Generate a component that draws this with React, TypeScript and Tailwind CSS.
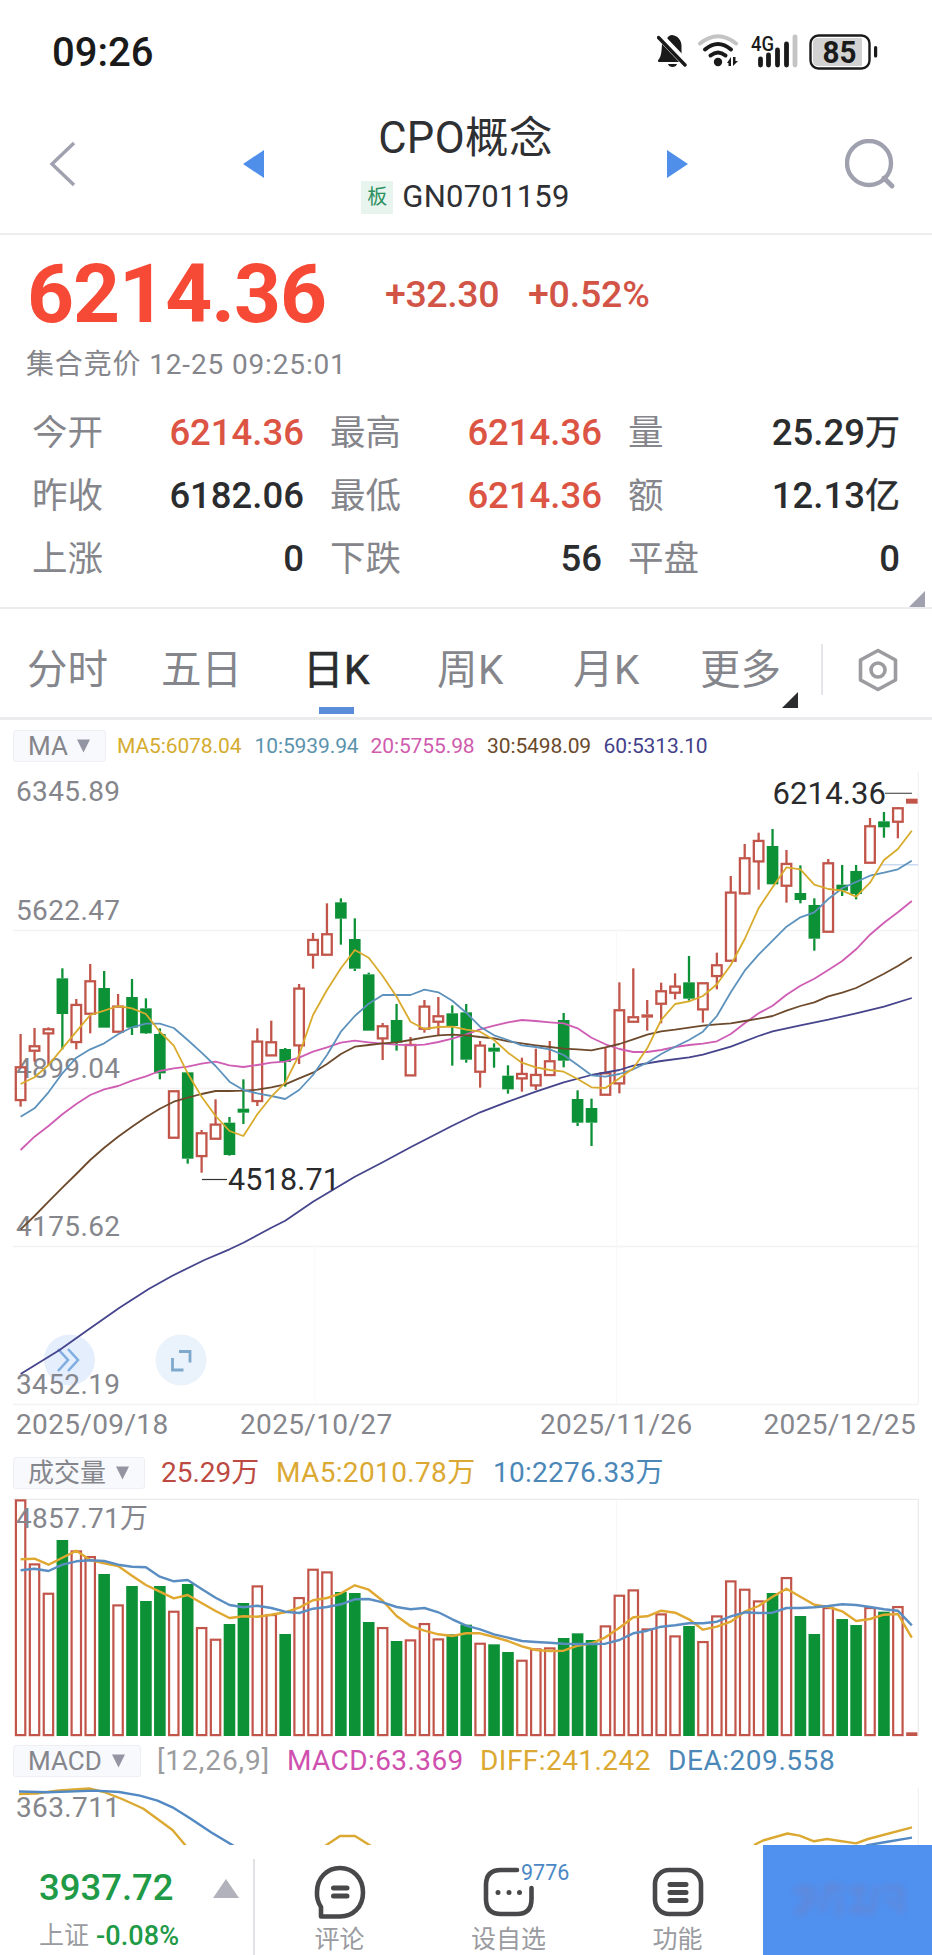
import React from "react";

type Candle = [up: 0 | 1, top: number, bottom: number, high: number, low: number];

// Each value below is in thirds of a pixel, measured from the top of its own panel.
const CANDLES: Candle[] = [
  [1, 920, 1022, 822, 1040], [1, 857, 874, 804, 905], [1, 806, 822, 802, 915], [0, 655, 762, 625, 868],
  [1, 733, 848, 717, 868], [1, 662, 763, 612, 820], [0, 684, 803, 633, 803], [1, 738, 817, 702, 817],
  [0, 711, 803, 657, 825], [0, 745, 820, 715, 822], [0, 822, 940, 805, 958], [1, 992, 1135, 992, 1135],
  [0, 937, 1196, 937, 1211], [1, 1118, 1190, 1110, 1238], [1, 1092, 1138, 1018, 1138], [0, 1088, 1185, 1071, 1187],
  [0, 1046, 1058, 958, 1092], [1, 843, 1025, 805, 1038], [1, 845, 888, 782, 888], [0, 867, 906, 864, 980],
  [1, 684, 858, 672, 912], [1, 538, 586, 519, 626], [1, 521, 586, 430, 586], [0, 427, 476, 415, 554],
  [0, 537, 626, 475, 633], [0, 643, 812, 638, 812], [1, 797, 837, 789, 900], [0, 780, 848, 732, 872],
  [1, 853, 948, 831, 948], [1, 738, 808, 720, 818], [1, 767, 787, 711, 825], [0, 760, 798, 736, 917],
  [0, 757, 899, 732, 908], [1, 855, 937, 843, 983], [0, 863, 875, 850, 923], [0, 947, 988, 916, 1001],
  [1, 940, 957, 893, 995], [1, 943, 978, 866, 990], [1, 902, 947, 843, 947], [0, 780, 902, 759, 922],
  [0, 1017, 1088, 991, 1098], [0, 1044, 1088, 1016, 1158], [1, 938, 1006, 862, 1006], [1, 749, 972, 667, 1000],
  [1, 770, 787, 625, 787], [1, 763, 773, 720, 812], [1, 692, 733, 668, 790], [1, 678, 700, 640, 718],
  [0, 667, 716, 588, 722], [1, 668, 750, 668, 788], [1, 614, 650, 578, 688], [1, 396, 604, 348, 604],
  [1, 293, 402, 252, 404], [1, 241, 306, 218, 389], [0, 258, 373, 207, 373], [1, 310, 379, 270, 428],
  [0, 399, 420, 316, 430], [0, 435, 536, 415, 572], [1, 308, 517, 297, 517], [0, 374, 392, 315, 408],
  [0, 333, 402, 315, 418], [1, 197, 310, 174, 310], [0, 184, 202, 156, 233], [1, 143, 187, 141, 235],
  [1, 116, 131, 116, 131],
];

const MA5 = [972, 952, 915, 865, 815, 765, 752, 738, 745, 762, 815, 857, 940, 1010, 1068, 1113, 1128, 1063, 1010, 968, 885, 765, 690, 625, 570, 593, 648, 710, 785, 807, 801, 800, 809, 815, 840, 878, 908, 922, 930, 935, 957, 982, 984, 955, 925, 865, 780, 732, 724, 708, 673, 615, 537, 445, 382, 322, 328, 374, 387, 392, 410, 368, 300, 267, 212];
const MA10 = [1070, 1045, 997, 940, 893, 868, 850, 823, 802, 791, 791, 804, 840, 878, 918, 965, 990, 1000, 1008, 1017, 990, 945, 885, 815, 768, 731, 705, 705, 705, 689, 697, 722, 758, 800, 826, 840, 856, 861, 868, 885, 915, 946, 950, 942, 928, 908, 882, 860, 840, 815, 768, 697, 632, 584, 542, 500, 472, 457, 417, 385, 366, 347, 338, 328, 302];
const MA20 = [1170, 1130, 1098, 1063, 1032, 1005, 988, 978, 962, 949, 933, 925, 920, 911, 905, 916, 921, 915, 908, 905, 893, 875, 862, 848, 842, 847, 851, 854, 856, 854, 846, 836, 823, 808, 797, 787, 780, 783, 787, 790, 805, 833, 853, 867, 876, 876, 870, 861, 855, 851, 844, 822, 790, 760, 737, 704, 677, 656, 630, 603, 568, 524, 488, 457, 423];
const MA30 = [1408, 1368, 1325, 1283, 1242, 1200, 1163, 1130, 1100, 1072, 1046, 1025, 1013, 1002, 993, 993, 992, 989, 982, 973, 955, 938, 912, 882, 860, 855, 850, 847, 840, 832, 826, 824, 826, 831, 835, 844, 850, 856, 861, 866, 868, 871, 862, 852, 838, 824, 814, 809, 803, 797, 793, 790, 783, 776, 768, 752, 738, 727, 709, 698, 684, 663, 641, 618, 592];
const MA60: [number, number][] = [[0, 1842], [2.8, 1770], [4.9, 1708], [7.1, 1643], [9.2, 1587], [10.9, 1547], [13.2, 1500], [15, 1468], [16, 1448], [18, 1403], [19, 1382], [21, 1325], [24, 1250], [26, 1207], [28, 1162], [31, 1097], [33, 1057], [35, 1025], [37, 995], [39, 967], [41, 945], [43, 930], [44, 917], [46, 903], [48, 892], [49, 884], [51, 860], [53, 828], [54, 814], [56, 796], [58, 779], [60, 760], [62, 740], [64, 714]];

const VOLUME = [60, 252, 340, 180, 213, 230, 282, 375, 318, 363, 318, 394, 312, 443, 478, 432, 369, 318, 404, 462, 353, 268, 276, 336, 339, 426, 443, 483, 480, 431, 477, 463, 434, 490, 493, 516, 541, 507, 504, 474, 460, 480, 438, 346, 330, 447, 402, 468, 438, 485, 408, 303, 328, 363, 339, 293, 408, 462, 383, 417, 435, 383, 395, 380, 758];
const VMA5 = [238, 236, 254, 233, 212, 240, 250, 258, 287, 315, 335, 355, 345, 369, 393, 414, 409, 410, 404, 397, 383, 361, 354, 340, 316, 329, 362, 408, 438, 452, 463, 468, 460, 460, 471, 483, 499, 510, 513, 512, 497, 490, 472, 443, 412, 409, 392, 398, 418, 449, 440, 425, 395, 378, 350, 326, 350, 374, 381, 394, 423, 417, 404, 402, 473];
const VMA10 = [271, 266, 273, 254, 244, 241, 243, 254, 260, 262, 290, 304, 300, 327, 353, 375, 382, 377, 384, 395, 399, 386, 381, 373, 358, 357, 367, 381, 388, 384, 397, 418, 437, 448, 463, 473, 483, 486, 488, 491, 492, 492, 491, 480, 460, 452, 440, 436, 430, 430, 425, 409, 397, 399, 398, 384, 384, 382, 378, 373, 375, 381, 388, 392, 436];

const RED = "#c2554a";
const GREEN = "#0c9136";

const cx = (i: number) => 20.6 + 13.925 * i;
const line = (d: number[]) => d.map((v, i) => `${cx(i).toFixed(1)},${(v / 3).toFixed(1)}`).join(" ");
const line2 = (d: [number, number][]) => d.map(([i, v]) => `${cx(i).toFixed(1)},${(v / 3).toFixed(1)}`).join(" ");

function CandleChart() {
  return (
    <svg width="932" height="650" viewBox="0 0 932 650" className="block">
      <g stroke="#f3f3f5" strokeWidth="1.3" fill="none">
        <path d="M13 170.500H918M13 328.500H918M13 486.500H918M13 644.500H918M918.300 12V644" />
        <path d="M616.500 170V644" stroke="#f8f8f9" />
        <path d="M315 486V644" stroke="#fbfbfc" />
      </g>
      <g fontSize="28" fill="#85868c">
        <text x="16" y="41" textLength="104">6345.89</text>
        <text x="16" y="160" textLength="104">5622.47</text>
        <text x="16" y="318" textLength="104">4899.04</text>
        <text x="16" y="476" textLength="104">4175.62</text>
      </g>
      <circle cx="69.5" cy="600" r="25.5" fill="#4d8fe8" fillOpacity=".15" />
      <circle cx="181" cy="600" r="25.5" fill="#eaf2fc" />
      <path d="M58 589l10 11-10 11M68 589l10 11-10 11" fill="none" stroke="#80aee0" strokeWidth="2.6" />
      <path d="M179 591.500h11v11M172.500 598v12h11" fill="none" stroke="#7fa9cc" strokeWidth="2.800" />
      <text x="16" y="634" fontSize="28" fill="#85868c" textLength="104">3452.19</text>
      <path d="M880 104.700H918" stroke="#c9dcef" strokeWidth="1.5" />
      {CANDLES.map(([up, top, bottom, high, low], i) => {
        const x = cx(i);
        const t = top / 3;
        const b = bottom / 3;
        const color = up ? RED : GREEN;
        const solid = !up || b - t < 4 || i === 64;
        return (
          <g key={i} stroke={color} strokeWidth="2.3">
            {high < top && <path d={`M${x} ${high / 3}V${t}`} />}
            {low > bottom && <path d={`M${x} ${b}V${low / 3}`} />}
            {solid ? (
              <rect x={x - 5.8} y={t} width="11.6" height={b - t} fill={color} stroke="none" />
            ) : (
              <rect x={x - 4.8} y={t + 0.6} width="9.6" height={b - t - 1.2} fill="none" />
            )}
          </g>
        );
      })}
      <g fill="none" strokeWidth="1.800" strokeLinejoin="round">
        <polyline points={line(MA20)} stroke="#cf5db4" />
        <polyline points={line(MA30)} stroke="#6e4a2d" />
        <polyline points={line2(MA60)} stroke="#45448c" />
        <polyline points={line(MA10)} stroke="#5d92bd" />
        <polyline points={line(MA5)} stroke="#d9ab2c" />
      </g>
      <path d="M202 419.500H227" stroke="#333" strokeWidth="1.2" />
      <text x="228" y="430" fontSize="30.5" fill="#2a2a2c" textLength="112">4518.71</text>
      <path d="M885 33.300H912" stroke="#555" strokeWidth="1.2" />
      <text x="772.500" y="44" fontSize="31" fill="#2a2a2c" textLength="113.500">6214.36</text>
    </svg>
  );
}

function VolumeChart() {
  return (
    <svg width="932" height="258" viewBox="0 0 932 258" className="block">
      <path d="M13 19.400H919M918.300 19V256" stroke="#ebebee" strokeWidth="1.2" fill="none" />
      <path d="M616.500 20V256" stroke="#f7f7f8" strokeWidth="1.200" />
      {VOLUME.map((v, i) => {
        const x = cx(i);
        const t = v / 3;
        if (!CANDLES[i][0]) return <rect key={i} x={x - 5.8} y={t} width="11.600" height={256 - t} fill={GREEN} />;
        if (i === 64) return <rect key={i} x={x - 5.6} y={252.3} width="11.200" height="3.700" fill={RED} />;
        return <rect key={i} x={x - 4.7} y={t + 0.4} width="9.400" height={254.7 - t} fill="#fff" stroke={RED} strokeWidth="2.200" />;
      })}
      <text x="16" y="48" fontSize="28" fill="#85868c" textLength="132">4857.71万</text>
      <g fill="none" strokeWidth="2.400" strokeLinejoin="round">
        <polyline points={line(VMA5)} stroke="#e0a830" />
        <polyline points={line(VMA10)} stroke="#5a8dc2" />
      </g>
    </svg>
  );
}

function MacdChart() {
  return (
    <svg width="932" height="65" viewBox="0 0 932 65" className="block">
      <path d="M918.300 8V65" stroke="#f2f2f4" strokeWidth="1.200" />
      <g fill="none" strokeWidth="2.400" strokeLinejoin="round">
        <path d="M19 14L36 13.500 59 10.500 89 8.500 104 12 122 19 143 28.500 157.500 39 172.500 50 186 66" stroke="#dba932" />
        <path d="M19 11.500L48 12.300 95 10.600 119 12 140 15.600 157.500 20.600 172.500 27.300 190 38.300 211 52.300 234 66" stroke="#5289c4" />
        <path d="M325 66L340 56H355L371 66M754 65L763 60.500 787.500 53.500 799.500 55.600 814 61.300 827 59 856 63.400 868 59 912 47.300" stroke="#dba932" />
        <path d="M866 65.500L886 62 912 57.600" stroke="#5289c4" />
      </g>
      <text x="16" y="36.500" fontSize="28" fill="#85868c" textLength="104">363.711</text>
    </svg>
  );
}

function Picker({ label, className }: { label: string; className: string }) {
  return (
    <div className={`flex h-[32px] shrink-0 items-center justify-between rounded-[3px] border border-[#eeeff5] bg-[#f8f9fc] pr-[15px] pl-[14px] text-[26px] leading-none text-[#85868c] ${className}`}>
      <span>{label}</span>
      <svg width="13" height="14" viewBox="0 0 13 14"><path d="M0 .5h13L6.500 13.500z" fill="#9495a3" /></svg>
    </div>
  );
}

function StatusIcons() {
  return (
    <svg width="226" height="40" viewBox="0 0 226 40">
      <g fill="#1a1a1a">
        <path d="M10 5.500c1-2 3-3.500 5-3.500 6 1 9.500 5 9.500 11v8l2.500 5z" />
        <path d="M5 11l17 18H1.500c-1-1-.500-2 .5-3 2.500-3.500 2.500-8 3-15z" />
        <path d="M11 31h9c-1 4-8 4-9 0z" />
        <path d="M6.500 3.500L28 26" stroke="#fff" strokeWidth="2.800" />
        <path d="M1.500 4.500L28 32" stroke="#1a1a1a" strokeWidth="3.400" strokeLinecap="round" />
        <circle cx="61" cy="29" r="4.200" />
        <path d="M70 30l4-6v9h-2.500v-3zM76 24v9l5-5h-2.500v-4z" />
      </g>
      <g fill="none" strokeWidth="4" strokeLinecap="round">
        <path d="M43 10.500Q61-4 79 10.500" stroke="#c4c4c4" />
        <path d="M48 16.500Q61 5.500 74 16.500" stroke="#1a1a1a" />
        <path d="M53.500 22.500Q61 16.500 68.500 22.500" stroke="#1a1a1a" />
        <path d="M103.500 26v6M111.500 22v10M120.500 17v15M129.500 11v21" stroke="#1a1a1a" strokeWidth="4.800" />
        <path d="M138 4v28" stroke="#c4c4c4" strokeWidth="4.800" />
      </g>
      <text x="94" y="17.500" fontSize="20.500" fontWeight="500" fill="#1a1a1a" textLength="23" lengthAdjust="spacingAndGlyphs">4G</text>
      <rect x="153.500" y="2.500" width="59" height="33" rx="8" fill="#fff" stroke="#1a1a1a" strokeWidth="2.400" />
      <path d="M161 5h44v28h-44c-3.500 0-5-2.500-5-5V10c0-3 1.500-5 5-5z" fill="#d2d2d2" />
      <rect x="217" y="13" width="3.200" height="11.500" rx="1.500" fill="#1a1a1a" />
      <text x="165.500" y="29.500" fontSize="31" fontWeight="700" fill="#1a1a1a" textLength="34" lengthAdjust="spacingAndGlyphs">85</text>
    </svg>
  );
}

const STATS = [
  [["今开", "6214.36", 1], ["最高", "6214.36", 1], ["量", "25.29", 0, "万"]],
  [["昨收", "6182.06", 0], ["最低", "6214.36", 1], ["额", "12.13", 0, "亿"]],
  [["上涨", "0", 0], ["下跌", "56", 0], ["平盘", "0", 0]],
] as [string, string, number, string?][][];

export default function App() {
  return (
    <div className="flex h-[1955px] w-[932px] flex-col overflow-hidden bg-white font-['Roboto','Noto_Sans_CJK_SC',sans-serif] whitespace-nowrap text-[#2f3033]">
      <div className="flex h-[103px] shrink-0 items-center justify-between pt-[3px] pr-[49px] pl-[52px]">
        <span className="text-[40px] leading-none font-medium text-[#1a1a1a]">09:26</span>
        <StatusIcons />
      </div>

      <header className="flex h-[132px] shrink-0 border-b-2 border-[#ededf0] pr-[37px] pl-[49px]">
        <svg width="28" height="48" viewBox="0 0 28 48" className="mt-[37px]"><path d="M25 3L3 24l22 21" fill="none" stroke="#9fa1ae" strokeWidth="3.400" /></svg>
        <div className="ml-[166px] flex w-[445px] justify-between">
          <svg width="21" height="28" viewBox="0 0 21 28" className="mt-[47px]"><path d="M21 0v28L0 14z" fill="#4f8fea" /></svg>
          <div className="flex flex-col items-center">
            <h1 className="mt-[8px] text-[43.5px] leading-[56px] tracking-[0.4px]">CPO概念</h1>
            <div className="mt-[12px] flex items-center gap-[9px]">
              <span className="flex h-[33px] w-[32px] items-center justify-center bg-[#e8f5ee] text-[20px] leading-none text-[#2c9160]">板</span>
              <span className="text-[31px] leading-[36px] tracking-[0.25px]">GN0701159</span>
            </div>
          </div>
          <svg width="21" height="28" viewBox="0 0 21 28" className="mt-[47px]"><path d="M0 0v28l21-14z" fill="#4f8fea" /></svg>
        </div>
        <svg width="50" height="50" viewBox="0 0 50 50" className="mt-[36px] ml-auto"><circle cx="24" cy="24" r="22" fill="none" stroke="#9fa1ae" strokeWidth="4.400" /><path d="M39 39l8 8" stroke="#9fa1ae" strokeWidth="4.800" strokeLinecap="round" /></svg>
      </header>

      <section className="flex h-[374px] shrink-0 flex-col border-b-2 border-[#ededf0]">
        <div className="flex items-center pt-[12px] pl-[27px]">
          <span className="w-[358px] text-[82px] leading-[94px] font-bold tracking-[-1px] text-[#f64a36]">6214.36</span>
          <span className="mt-[2px] w-[143px] text-[37.5px] leading-none font-medium tracking-[-0.400px] text-[#d25446]">+32.30</span>
          <span className="mt-[2px] text-[37.500px] leading-none font-medium tracking-[-0.200px] text-[#d25446]">+0.52%</span>
        </div>
        <div className="mt-[8px] pl-[26px] text-[28px] leading-[32px] tracking-[0.850px] text-[#85868c]">集合竞价 12-25 09:25:01</div>
        <div className="mt-[21px] flex flex-col pr-[32px] pl-[32px]">
          {STATS.map((row, r) => (
            <div key={r} className="flex h-[63px] items-center gap-[26px]">
              {row.map(([k, v, red, unit]) => (
                <div key={k} className="flex w-[272px] items-center justify-between leading-none">
                  <span className="text-[35.5px] text-[#85868c]">{k}</span>
                  <span className={`text-[36.500px] font-medium ${red ? "text-[#dc5443]" : "text-[#2b2c2e]"}`}>
                    {v}
                    {unit && <span className="text-[35px] font-normal [-webkit-text-stroke:0.5px_#2b2c2e]">{unit}</span>}
                  </span>
                </div>
              ))}
            </div>
          ))}
        </div>
        <svg width="16" height="16" viewBox="0 0 16 16" className="mt-auto mr-[7px] mb-[2px] shrink-0 self-end"><path d="M16 0v16H0z" fill="#9fa1ae" /></svg>
      </section>

      <nav className="flex h-[111px] shrink-0 border-b-[3px] border-[#ececee] pl-[27px] text-[40.5px] leading-none text-[#85868c]">
        <span className="mt-[41px] w-[134px]">分时</span>
        <span className="mt-[41px] w-[142px]">五日</span>
        <div className="flex w-[134px] flex-col">
          <span className="mt-[41px] tracking-[0.500px] text-[#2b2c2e] [-webkit-text-stroke:0.7px_#2b2c2e]">日K</span>
          <span className="mt-[16px] ml-[16px] h-[7px] w-[35px] bg-[#5b8ddb]" />
        </div>
        <span className="mt-[41px] w-[136px] tracking-[0.500px]">周K</span>
        <span className="mt-[41px] w-[127px] tracking-[0.500px]">月K</span>
        <span className="mt-[41px] w-[82px]">更多</span>
        <svg width="16" height="16" viewBox="0 0 16 16" className="mt-[83px]"><path d="M16 0v16H0z" fill="#2b2c2e" /></svg>
        <div className="mt-[35px] ml-[23px] h-[51px] w-[2px] bg-[#e6e6ea]" />
        <svg width="40" height="44" viewBox="0 0 40 44" className="mt-[39px] ml-[35px]"><path d="M20 2.500l17.500 9.500v20L20 41.500 2.500 32V12z" fill="none" stroke="#9c9ca0" strokeWidth="3.600" strokeLinejoin="round" /><circle cx="20" cy="22" r="7" fill="none" stroke="#9c9ca0" strokeWidth="3.600" /></svg>
      </nav>

      <div className="flex h-[40px] shrink-0 items-end pl-[13px] text-[21px] leading-none">
        <Picker label="MA" className="mr-[11px] mb-[-2px] w-[93px]" />
        <div className="mb-[3px] flex tracking-[-0.100px]">
          <span className="w-[137.500px] text-[#d4ab30]">MA5:6078.04</span>
          <span className="w-[116px] text-[#5b93ad]">10:5939.94</span>
          <span className="w-[116.500px] text-[#cf5cae]">20:5755.98</span>
          <span className="w-[116.500px] text-[#6b4a2c]">30:5498.09</span>
          <span className="text-[#43418a]">60:5313.10</span>
        </div>
      </div>

      <main className="flex shrink-0 flex-col">
        <CandleChart />
        <div className="flex h-[46px] items-center pb-[17px] pl-[16px] text-[28px] leading-none tracking-[0.35px] text-[#85868c]">
          <span className="w-[224px]">2025/09/18</span>
          <span className="w-[300px]">2025/10/27</span>
          <span className="w-[223.500px]">2025/11/26</span>
          <span>2025/12/25</span>
        </div>
        <div className="mb-[-9px] flex h-[33px] items-center pl-[13px] text-[28px] leading-none">
          <Picker label="成交量" className="mr-[16px] w-[132px]" />
          <span className="w-[115px] text-[#bd4a42]">25.29万</span>
          <span className="w-[217px] tracking-[0.350px] text-[#dba932]">MA5:2010.78万</span>
          <span className="tracking-[0.250px] text-[#4b88b8]">10:2276.33万</span>
        </div>
        <VolumeChart />
        <div className="flex h-[42px] items-center pt-[4px] pl-[13px] text-[28px] leading-none">
          <Picker label="MACD" className="mr-[16px] w-[128px]" />
          <span className="w-[130px] tracking-[0.950px] text-[#9b9ca0]">[12,26,9]</span>
          <span className="w-[193px] tracking-[0.400px] text-[#cf50ae]">MACD:63.369</span>
          <span className="w-[188px] tracking-[0.450px] text-[#dba932]">DIFF:241.242</span>
          <span className="tracking-[0.550px] text-[#4b88b8]">DEA:209.558</span>
        </div>
        <MacdChart />
      </main>

      <footer className="flex h-[110px] shrink-0 bg-white">
        <div className="flex w-[253px] flex-col pl-[39px]">
          <div className="mt-[24px] flex items-center">
            <span className="w-[174px] text-[36.500px] leading-[38px] font-medium text-[#1f9a46]">3937.72</span>
            <svg width="26" height="19" viewBox="0 0 26 19"><path d="M13 0l13 19H0z" fill="#b2b2bd" /></svg>
          </div>
          <div className="mt-[15px] flex items-center gap-[7px] leading-[28px]">
            <span className="text-[25px] text-[#9a9ba0]">上证</span>
            <span className="text-[27px] font-medium tracking-[0.100px] text-[#1f9a46]">-0.08%</span>
          </div>
        </div>
        <div className="mt-[14px] w-[2px] bg-[#e2e2e6]" />
        <div className="flex flex-1 items-start text-[25px] leading-[26px] text-[#9a9ba0]">
          <div className="flex w-[169px] flex-col items-center gap-[8px] pt-[20px]">
            <svg width="52" height="54" viewBox="0 0 52 54" fill="none" stroke="#48484a" strokeWidth="4.600"><path d="M7 51.500V42A24 24 0 0 1 3 27C3 13 13 3 26 3s23 10 23 24.500S39 51.500 26 51.500z" strokeLinejoin="round" /><path d="M19.500 23h13.500M19.500 31h13.500" strokeWidth="5" strokeLinecap="round" /></svg>
            <span>评论</span>
          </div>
          <div className="relative flex w-[169px] flex-col items-center gap-[8px] pt-[20px]">
            <svg width="52" height="54" viewBox="0 0 52 54" fill="none" stroke="#48484a" strokeWidth="4.600" strokeLinecap="round"><path d="M34 5H18Q3 5 3 20v14q0 15 15 15h16q14.500 0 14.500-15V23" /><path d="M15 27.500h.01M26 27.500h.01M36.500 27.500h.01" strokeWidth="5" /></svg>
            <span>设自选</span>
            <span className="absolute top-[15px] left-[97px] text-[21.500px] text-[#4b88c4]">9776</span>
          </div>
          <div className="flex w-[169px] flex-col items-center gap-[8px] pt-[20px]">
            <svg width="52" height="54" viewBox="0 0 52 54" fill="none" stroke="#48484a" strokeWidth="4.600" strokeLinecap="round"><rect x="3" y="5" width="46" height="44" rx="14" /><path d="M18 19.500h16M18 27.500h16M18 35.500h16" strokeWidth="5" /></svg>
            <span>功能</span>
          </div>
        </div>
        <div className="flex w-[169px] items-center justify-center bg-[#5090ef]">
          <svg width="130" height="60" viewBox="0 0 130 60">
            <g fill="none" stroke="#6a83cc" strokeWidth="5" className="blur-[3px]" opacity=".6">
              <path d="M10 20h24M22 14v30M12 44l24-18M40 18h22M50 12l-12 30M56 26v20M66 20h18M76 14v30M66 40h20M94 16l-6 28M100 18h18v26M104 28l8 8" />
            </g>
          </svg>
        </div>
      </footer>
    </div>
  );
}
